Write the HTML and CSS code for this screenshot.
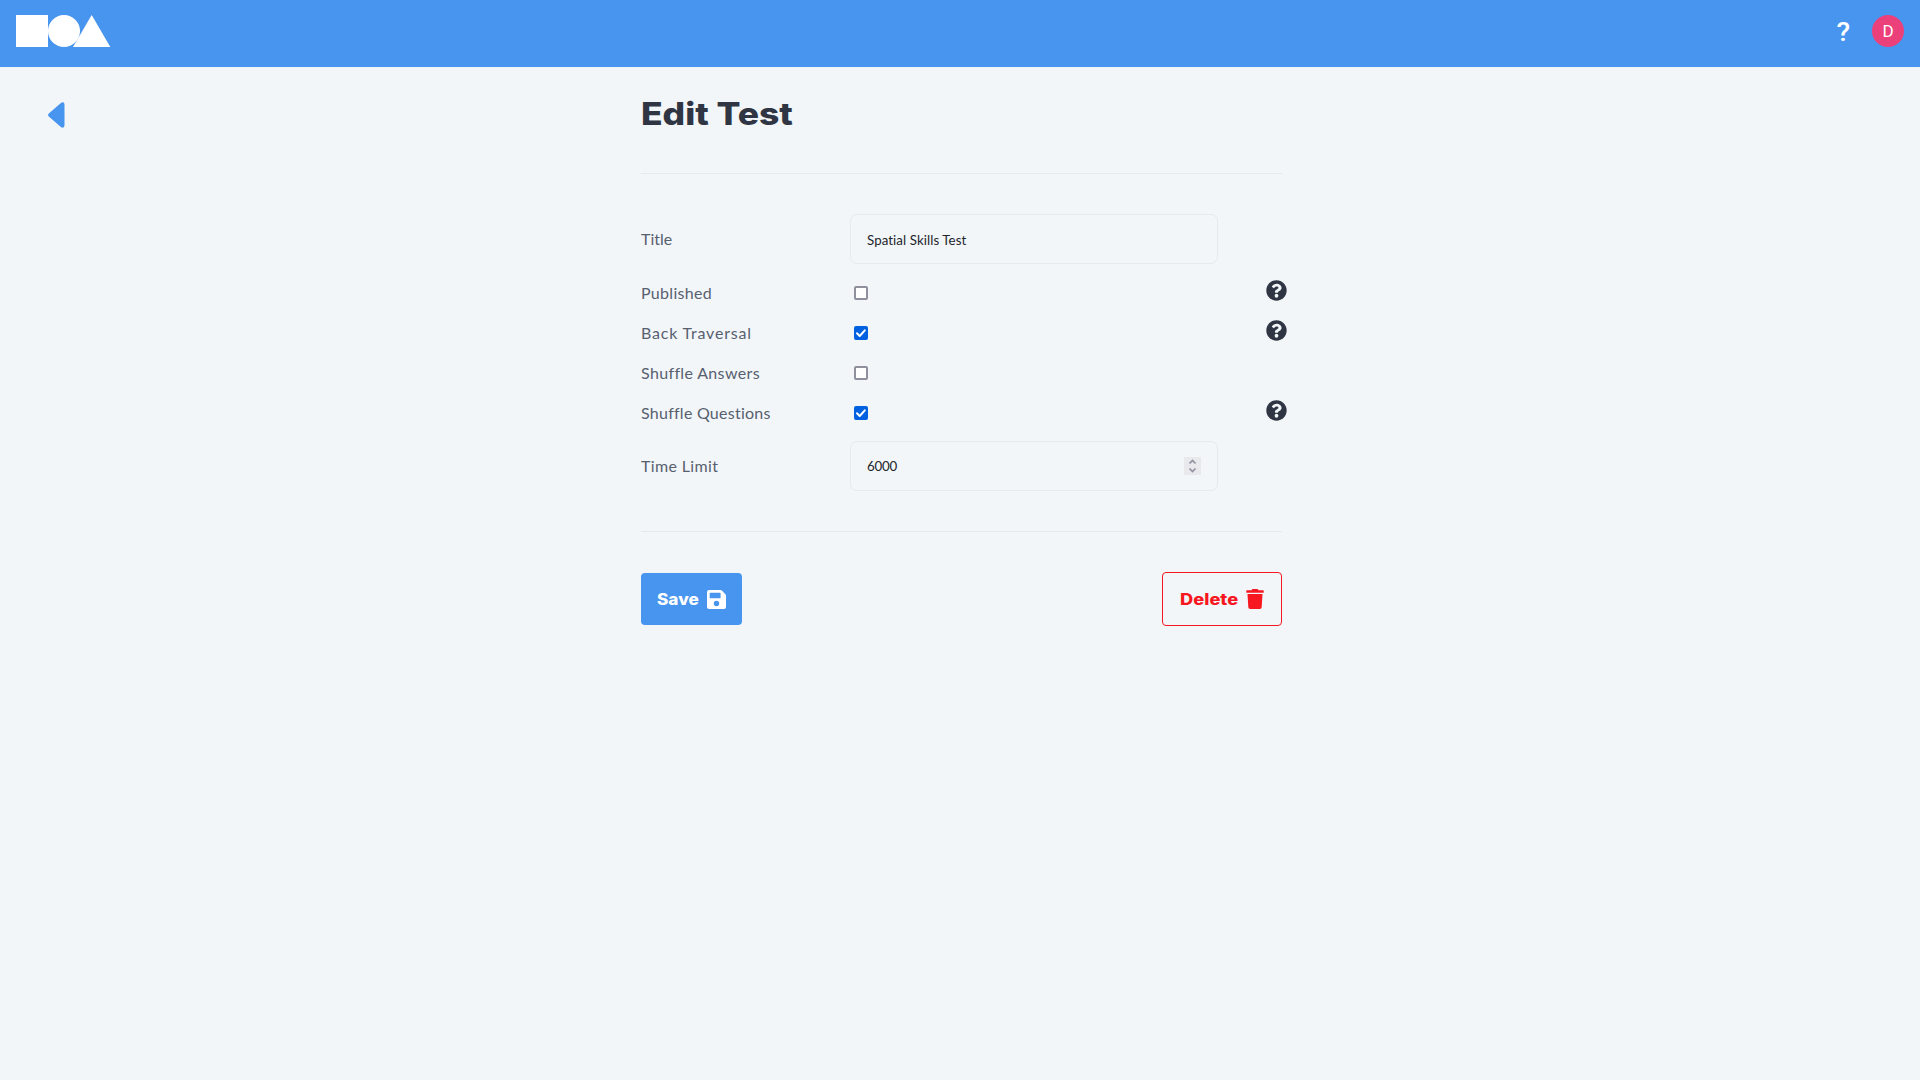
FILE: index.html
```html
<!DOCTYPE html>
<html lang="en">
<head>
<meta charset="utf-8">
<title>Edit Test</title>
<link rel="stylesheet" href="styles.css">
</head>
<body>
<header class="topbar">
  <svg class="logo" width="96" height="34" viewBox="0 0 96 34" fill="#fff"><path d="M0 0h32v32H0z"/><circle cx="48" cy="16" r="16"/><path d="M75.7 0 94.3 32H57z"/></svg>
  <div class="account">
    <span class="help-link">?</span>
    <span class="avatar">D</span>
  </div>
</header>
<div class="page">
  <a class="back"><svg width="17" height="26" viewBox="0 0 17 26"><path d="M13.2.7.8 11.4q-1.5 1.6 0 3.2L13.2 25.3q3.3 1.3 3.3-2V2.7q0-3.300-3.300-2z" fill="#4895ef"/></svg></a>
  <main class="content">
    <h1 class="heading">Edit Test</h1>
    <form class="form">
      <div class="row tall"><label class="label title">Title</label><div class="input"><span class="value name">Spatial Skills Test</span></div></div>
      <div class="row"><label class="label published">Published</label><span class="check"></span>
        <svg class="hint" viewBox="0 0 512 512"><use href="#question"/></svg></div>
      <div class="row"><label class="label back-traversal">Back Traversal</label><span class="check on"><svg viewBox="0 0 14 14"><path d="m3 7.300 2.700 2.700 5.100-5.700"/></svg></span>
        <svg class="hint" viewBox="0 0 512 512"><use href="#question"/></svg></div>
      <div class="row"><label class="label answers">Shuffle Answers</label><span class="check"></span></div>
      <div class="row"><label class="label questions">Shuffle Questions</label><span class="check on"><svg viewBox="0 0 14 14"><path d="m3 7.300 2.700 2.700 5.100-5.700"/></svg></span>
        <svg class="hint" viewBox="0 0 512 512"><use href="#question"/></svg></div>
      <div class="row tall last"><label class="label time">Time Limit</label><div class="input"><span class="value number">6000</span>
        <span class="spinner"><svg width="17" height="18" viewBox="0 0 17 18"><path d="m5.500 6.500 3-3 3 3M5.500 11.500l3 3 3-3"/></svg></span></div></div>
    </form>
    <div class="actions">
      <button class="button save"><span class="save-text">Save</span><svg width="19" height="19" viewBox="0 0 448 448"><path fill="#fff" fill-rule="evenodd" d="M434 98 350 14A48 48 0 0 0 316 0H48A48 48 0 0 0 0 48v352a48 48 0 0 0 48 48h352a48 48 0 0 0 48-48V132a48 48 0 0 0-14-34zM224 384a64 64 0 1 1 0-128 64 64 0 0 1 0 128zm96-304v100a12 12 0 0 1-12 12H76a12 12 0 0 1-12-12V76a12 12 0 0 1 12-12h228a12 12 0 0 1 9 4l4 3a12 12 0 0 1 3 9z"/></svg></button>
      <button class="button delete"><span class="delete-text">Delete</span><svg width="18" height="20" viewBox="0 0 448 512"><path fill="#f71720" d="M432 32H312l-9-19A24 24 0 0 0 281 0H167a24 24 0 0 0-22 13l-9 19H16A16 16 0 0 0 0 48v32a16 16 0 0 0 16 16h416a16 16 0 0 0 16-16V48a16 16 0 0 0-16-16zM53 467a48 48 0 0 0 48 45h246a48 48 0 0 0 48-45l21-339H32z"/></svg></button>
    </div>
  </main>
</div>
<svg class="symbols" width="0" height="0"><defs><path id="question" fill="#2f3542" d="M504 256c0 137-111 248-248 248S8 393 8 256 119 8 256 8s248 111 248 248zM263 90c-55 0-89 23-117 64-3 5-2 12 3 16l35 26c5 4 13 3 17-2 18-23 30-36 57-36 20 0 46 13 46 33 0 15-13 23-33 34-24 13-55 30-55 71v4c0 7 5 12 12 12h56c7 0 12-5 12-12v-1c0-29 84-30 84-108 0-58-61-101-117-101zm-7 248a46 46 0 1 0 0 92 46 46 0 0 0 0-92z"/></defs></svg>
</body>
</html>
```
FILE: styles.css
```css
* { box-sizing: border-box; }
body { margin: 0; height: 1080px; overflow: hidden; background: #f2f6f9; color: #2f3542; font-family: Lato, sans-serif; }
.topbar { height: 67px; padding: 15px 16px; display: flex; justify-content: space-between; align-items: flex-start; background: #4895ef; color: #fff; }
.account { display: flex; align-items: center; gap: 22px; }
.help-link { font: 500 25px/32px Roboto, sans-serif; padding-top: 2px; margin-bottom: -2px; transform: scaleX(1.12); transform-origin: right; }
.avatar { width: 32px; height: 32px; border-radius: 50%; background: #ec407a; text-align: center; font: 400 17px/32px Roboto, sans-serif; }
.page { display: grid; grid-template-columns: 641px 641px; }
.back { padding: 35px 0 0 48px; }
.heading { margin: 0; width: 300px; height: 106px; padding: 27px 0 0; font: 800 31.500px/40px Inter, sans-serif; white-space: nowrap; transform: scaleX(1.125); transform-origin: left; }
.form { border: solid #e6eaed; border-width: 1px 0; height: 359px; padding-top: 40px; }
.row { height: 40px; display: grid; grid-template-columns: 209px 416px 21px; width: 647px; align-items: center; }
.tall { height: 50px; margin-bottom: 8px; }
.last { margin-top: 9px; }
.label { font-size: 16px; line-height: 20px; padding-top: 1px; color: #57606f; white-space: nowrap; }
.tall .label { padding-top: 0; }
.published { letter-spacing: .3px; }
.back-traversal { letter-spacing: .8px; }
.answers { letter-spacing: .35px; }
.questions { letter-spacing: .25px; }
.time { letter-spacing: .35px; }
.input { width: 368px; height: 50px; border: 1px solid #e6eaed; border-radius: 7px; padding: 0 16px 0 16px; display: flex; align-items: center; justify-content: space-between; color: #22252a; }
.value { font-size: 13.300px; line-height: 20px; padding-top: 1px; white-space: nowrap; }
.name { letter-spacing: .07px; }
.number { letter-spacing: -.25px; padding-top: 0; }
.check { width: 14px; height: 14px; margin: 1px 0 0 4px; border: 2px solid #8f8f9d; border-radius: 2px; background: #fff; }
.on { border: 0; background: #0060df; }
.on svg { display: block; fill: none; stroke: #fff; stroke-width: 2; stroke-linecap: round; stroke-linejoin: round; }
.hint { width: 21px; height: 21px; margin-bottom: 3px; }
.spinner { width: 17px; height: 18px; background: #e9e9ed; }
.spinner svg { display: block; fill: none; stroke: #8f8f9d; stroke-width: 1.600; }
.actions { display: flex; justify-content: space-between; align-items: center; padding-top: 40px; }
.button { display: flex; align-items: center; justify-content: space-between; border-radius: 4px; font: 800 15.500px/20px Inter, sans-serif; }
.save { width: 101px; height: 52px; border: 0; padding: 0 16px 0 16px; color: #fff; background: #4895ef; }
.delete { width: 120px; height: 54px; border: 1px solid #f71720; padding: 0 17px; color: #f71720; background: transparent; }
.save-text, .delete-text { padding-top: 1px; transform: scaleX(1.11); transform-origin: left; }
.delete-text { transform: scaleX(1.18); }
.symbols { display: block; }
```
